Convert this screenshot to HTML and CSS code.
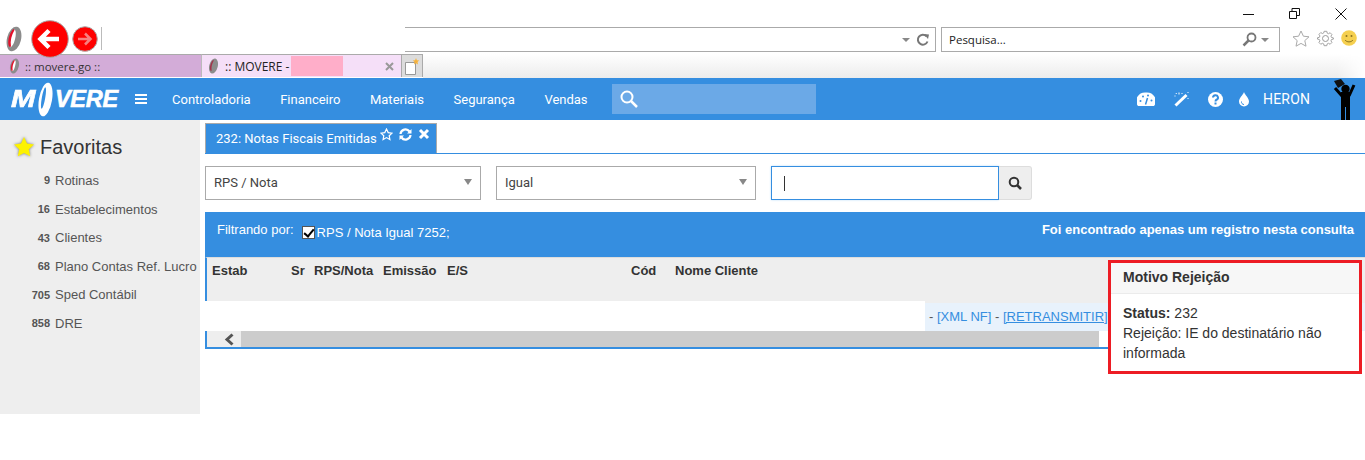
FILE: index.html
```html
<!DOCTYPE html>
<html lang="pt-BR">
<head>
<meta charset="utf-8">
<title>MOVERE</title>
<link rel="stylesheet" href="styles.css">
</head>
<body>
<div class="chrome">
  <div class="winbar">
    <svg class="win-ico" width="12" height="12" viewBox="0 0 12 12"><path d="M0 6.500h11" stroke="#111" fill="none"/></svg>
    <svg class="win-ico" width="12" height="12" viewBox="0 0 12 12"><path d="M.5 3.500h7v7h-7zM3 3V.5h7.500v7H8" stroke="#111" fill="none"/></svg>
    <svg class="win-ico" width="12" height="12" viewBox="0 0 12 12"><path d="M.5 .5l11 11M11.500 .5l-11 11" stroke="#111" fill="none"/></svg>
  </div>
  <div class="toolbar">
    <svg class="brand" width="18" height="26" viewBox="0 0 18 26"><ellipse cx="9" cy="13" rx="7" ry="12.500" transform="rotate(14 9 13)" fill="#8c8c8c"/><ellipse cx="7.500" cy="12.500" rx="2.600" ry="9" transform="rotate(14 7.500 12.500)" fill="#fff"/><path d="M8.500 3C5 6 2.500 13 3.500 19c.5 2 1.500 2.500 2.500 1.500C5 15 6.500 9 9.500 4z" fill="#e3102a"/></svg>
    <div class="nav-btns">
      <svg class="back" width="38" height="38" viewBox="0 0 38 38"><circle cx="19" cy="19" r="18.300" fill="#f00" stroke="#aaa"/><path d="M28 19H11M18 10.500L9.500 19l8.500 8.500" stroke="#fff" stroke-width="4.500" fill="none"/></svg>
      <svg class="fwd" width="26" height="26" viewBox="0 0 26 26"><circle cx="13" cy="13" r="12.300" fill="#f00" stroke="#aaa"/><path d="M6 13h12M13 7.500l5.500 5.500-5.500 5.500" stroke="#f78080" stroke-width="2.500" fill="none"/></svg>
      <span class="sep"></span>
    </div>
    <div class="address">
      <span class="caret-down"></span>
      <svg width="14" height="14" viewBox="0 0 14 14"><path d="M11.500 8.500A5 5 0 1 1 10.500 3.200" stroke="#777" stroke-width="2" fill="none"/><path d="M8 1l5 .5-1 4.500z" fill="#777"/></svg>
    </div>
    <div class="searchbar">
      <span class="searchbar-text">Pesquisa...</span>
      <svg width="15" height="15" viewBox="0 0 15 15"><circle cx="9.500" cy="5.500" r="4" stroke="#777" stroke-width="1.800" fill="none"/><path d="M6.500 8.500L1.500 13.500" stroke="#777" stroke-width="2.500"/></svg>
      <span class="caret-down"></span>
    </div>
    <div class="tools">
      <svg width="18" height="17" viewBox="0 0 18 17"><path d="M9 1l2.400 5.200 5.600.6-4.200 3.800 1.200 5.600L9 13.400l-5 2.800 1.200-5.600L1 6.800l5.600-.6z" fill="#fff" stroke="#aaa"/></svg>
      <svg width="17" height="17" viewBox="0 0 17 17"><path d="M7 1h3l.4 2 1.500.7 1.800-1.100 2 2-1.100 1.800.7 1.500 2 .4v1.400l-2 .4-.7 1.500 1.100 1.800-2 2-1.800-1.100-1.500.7-.4 2H7l-.4-2-1.500-.7-1.800 1.100-2-2 1.100-1.800-.7-1.500-2-.4V8.100l2-.4.7-1.500L1.300 4.400l2-2 1.800 1.100 1.500-.7z" transform="translate(.8 .4) scale(.9)" fill="#fff" stroke="#999"/><circle cx="8.500" cy="8.500" r="3" fill="#fff" stroke="#999"/></svg>
      <svg width="16" height="16" viewBox="0 0 16 16"><circle cx="8" cy="8" r="7.800" fill="#f5cf4f"/><circle cx="5.500" cy="6" r="1" fill="#8a7420"/><circle cx="10.500" cy="6" r="1" fill="#8a7420"/><path d="M4 10c2 2.500 6 2.500 8 0" stroke="#8a7420" fill="none"/></svg>
    </div>
  </div>
  <div class="tabbar">
    <div class="btab btab-off">
      <svg width="11" height="16" viewBox="0 0 18 26"><ellipse cx="9" cy="13" rx="7" ry="12.500" transform="rotate(14 9 13)" fill="#8c8c8c"/><ellipse cx="7.500" cy="12.500" rx="2.600" ry="9" transform="rotate(14 7.500 12.500)" fill="#fff"/><path d="M8.500 3C5 6 2.500 13 3.500 19c.5 2 1.500 2.500 2.500 1.500C5 15 6.500 9 9.500 4z" fill="#e3102a"/></svg>
      <span>:: movere.go ::</span>
    </div>
    <div class="btab btab-on">
      <svg width="11" height="16" viewBox="0 0 18 26"><ellipse cx="9" cy="13" rx="7" ry="12.500" transform="rotate(14 9 13)" fill="#8c8c8c"/><path d="M8.500 3C5 6 2.500 13 3.500 19c.5 2 1.500 2.500 2.500 1.500C5 15 6.500 9 9.500 4z" fill="#a3324a"/></svg>
      <span class="btab-label">:: MOVERE -</span>
      <span class="redact"></span>
      <svg class="btab-x" width="9" height="9" viewBox="0 0 9 9"><path d="M1 1l7 7M8 1L1 8" stroke="#999" stroke-width="2"/></svg>
    </div>
    <div class="newtab">
      <svg width="16" height="17" viewBox="0 0 16 17"><path d="M1.500 4.500h10v12h-10z" fill="#fff" stroke="#999"/><path d="M12 0l.9 2.200 2.300.3-1.700 1.600.5 2.400L12 5.300 10 6.500l.5-2.400-1.700-1.600 2.300-.3z" fill="#f7b23b"/></svg>
    </div>
    <div class="tabfade"></div>
  </div>
</div>

<header class="topnav">
  <div class="logo">
    <span class="logo-m">M</span>
    <svg class="logo-tire" width="17" height="35" viewBox="0 0 17 35"><ellipse cx="8.500" cy="17.500" rx="6.500" ry="17" transform="rotate(10 8.500 17.500)" fill="#fff"/><ellipse cx="6.500" cy="16" rx="1.700" ry="11" transform="rotate(10 6.500 16)" fill="#358ee0"/></svg>
    <span class="logo-rest">VERE</span>
  </div>
  <svg class="burger" width="12" height="10" viewBox="0 0 12 10"><path d="M0 1h12M0 5h12M0 9h12" stroke="#fff" stroke-width="2"/></svg>
  <nav class="menu">
    <span>Controladoria</span><span>Financeiro</span><span>Materiais</span><span>Segurança</span><span>Vendas</span>
  </nav>
  <div class="navsearch">
    <svg width="18" height="18" viewBox="0 0 18 18"><circle cx="7" cy="7" r="5.500" stroke="#fff" stroke-width="2" fill="none"/><path d="M11 11l6 6" stroke="#fff" stroke-width="2.500"/></svg>
  </div>
  <div class="navright">
    <svg class="ni-gauge" width="18" height="14" viewBox="0 0 18 14"><path d="M1 14A9 8.500 0 0 1 9 .5 9 8.500 0 0 1 17 14z" fill="#fff"/><path d="M8.500 12.500L10.500 6" stroke="#358ee0" stroke-width="1.500"/><circle cx="3.500" cy="9" r="1" fill="#358ee0"/><circle cx="6" cy="4.500" r="1" fill="#358ee0"/><circle cx="11" cy="3.500" r="1" fill="#358ee0"/><circle cx="14.500" cy="8.500" r="1" fill="#358ee0"/></svg>
    <svg class="ni-wand" width="15" height="15" viewBox="0 0 15 15"><path d="M1.500 13.500L12.500 3" stroke="#fff" stroke-width="3"/><path d="M2 1l.5 1M5 .5v2M8 1v1M14 6v1M.5 4h1M14 0v1" stroke="#fff"/></svg>
    <svg class="ni-help" width="15" height="15" viewBox="0 0 15 15"><circle cx="7.500" cy="7.500" r="7.500" fill="#fff"/><path d="M5 5.500a2.500 2.300 0 1 1 3.500 2.200c-.7.4-1 .8-1 1.800" stroke="#358ee0" stroke-width="2" fill="none"/><rect x="6.500" y="10.500" width="2" height="2" fill="#358ee0"/></svg>
    <svg class="ni-drop" width="12" height="15" viewBox="0 0 12 15"><path d="M6 0c1 3 5 6 5 9.500a5 5 0 0 1-10 0C1 6 5 3 6 0z" fill="#fff"/><path d="M3.500 9.500a2.500 2.500 0 0 0 2.500 3" stroke="#358ee0" fill="none"/></svg>
    <span class="username">HERON</span>
    <svg class="ni-man" width="26" height="41" viewBox="0 0 26 41"><path d="M9 13h9v28h-4V28h-1v13H9z" fill="#000"/><circle cx="13.500" cy="10" r="4.200" fill="#000"/><path d="M10 17L3 9M17 17l5-11" stroke="#000" stroke-width="3" fill="none"/><path d="M2 2l7-2 4 5-7 4z" fill="#111"/></svg>
  </div>
</header>

<div class="page">
  <aside class="sidebar">
    <h2 class="fav-title">
      <svg class="fav-star" width="22" height="22" viewBox="0 0 22 22"><path d="M11 1l3 6.600 7 .8-5.200 4.800 1.400 7L11 17l-6.200 3.200 1.400-7L1 8.400l7-.8z" fill="#fdf200"/></svg>
      <span>Favoritas</span>
    </h2>
    <ul class="fav-list">
      <li><b>9</b><span>Rotinas</span></li>
      <li><b>16</b><span>Estabelecimentos</span></li>
      <li><b>43</b><span>Clientes</span></li>
      <li><b>68</b><span>Plano Contas Ref. Lucro</span></li>
      <li><b>705</b><span>Sped Contábil</span></li>
      <li><b>858</b><span>DRE</span></li>
    </ul>
  </aside>
  <main class="main">
    <div class="tabline">
      <div class="apptab">
        <span class="apptab-label">232: Notas Fiscais Emitidas</span>
        <div class="apptab-icons">
          <svg width="13" height="13" viewBox="0 0 13 13"><path d="M6.500 1l1.700 3.600 3.800.5-2.800 2.600.7 3.800-3.400-1.900-3.400 1.900.7-3.800L1 5.100l3.800-.5z" fill="none" stroke="#fff" stroke-width="1.200"/></svg>
          <svg width="13" height="13" viewBox="0 0 13 13"><path d="M1.500 6A5 5 0 0 1 10.500 3.500M11.500 7A5 5 0 0 1 2.500 9.500" stroke="#fff" stroke-width="2.200" fill="none"/><path d="M12.500 1v4.500H8zM.5 12V7.500H5z" fill="#fff"/></svg>
          <svg width="12" height="12" viewBox="0 0 12 12"><path d="M2 2l8 8M10 2l-8 8" stroke="#fff" stroke-width="3"/></svg>
        </div>
      </div>
    </div>
    <div class="filters">
      <div class="select select-a"><span>RPS / Nota</span><i></i></div>
      <div class="select select-b"><span>Igual</span><i></i></div>
      <div class="searchgroup">
        <div class="textbox"><span class="cursor"></span></div>
        <button class="go" type="button"><svg width="14" height="14" viewBox="0 0 14 14"><circle cx="6" cy="6" r="4.300" stroke="#333" stroke-width="2" fill="none"/><path d="M9 9l4 4" stroke="#333" stroke-width="2.500"/></svg></button>
      </div>
    </div>
    <section class="panel">
      <div class="panel-left">
        <span class="panel-label">Filtrando por:</span>
        <label class="panel-check"><input type="checkbox" checked>RPS / Nota Igual 7252;</label>
      </div>
      <strong class="panel-right">Foi encontrado apenas um registro nesta consulta</strong>
    </section>
    <div class="thead">
      <span>Estab</span><span>Sr</span><span>RPS/Nota</span><span>Emissão</span><span>E/S</span><span>Cód</span><span>Nome Cliente</span>
    </div>
    <div class="trow">
      <div class="tcell">- <a href="#">[XML NF]</a> - <a href="#" class="under">[RETRANSMITIR]</a></div>
    </div>
    <div class="hscroll">
      <span class="hs-btn"><svg width="11" height="13" viewBox="0 0 11 13"><path d="M8.500 1.500L3 6.500l5.500 5" stroke="#555" stroke-width="3" fill="none"/></svg></span>
      <span class="hs-thumb"></span>
    </div>
    <div class="popover">
      <div class="pop-head">Motivo Rejeição</div>
      <div class="pop-body"><b>Status:</b> 232<br>Rejeição: IE do destinatário não informada</div>
    </div>
  </main>
</div>
</body>
</html>
```

FILE: styles.css
```css
* { box-sizing: border-box; }
html, body { margin: 0; padding: 0; background: #fff; }
body { width: 1365px; height: 460px; overflow: hidden; font-family: "Liberation Sans", Arial, sans-serif; color: #333; }

/* browser chrome */
.chrome { height: 78px; background: #fff; }
.winbar { height: 27px; display: flex; justify-content: flex-end; gap: 34px; padding: 8px 18px 0 0; }
.win-ico { display: block; }
.toolbar { height: 27px; display: flex; align-items: flex-start; position: relative; }
.brand { margin: -1px 0 0 5px; flex: none; }
.nav-btns { width: 382px; flex: none; position: relative; display: flex; align-items: flex-start; }
.back { margin: -7px 0 0 8px; position: relative; z-index: 2; flex: none; }
.fwd { margin: -1px 0 0 3px; flex: none; }
.sep { width: 1px; height: 23px; background: #bbb; margin-left: 3px; }
.address { width: 531px; height: 25px; border: 1px solid #aaa; border-left: 0; display: flex; align-items: center; justify-content: flex-end; gap: 6px; padding-right: 5px; }
.caret-down { width: 0; height: 0; border: 4px solid transparent; border-top: 4px solid #888; border-bottom: 0; }
.searchbar { width: 339px; height: 25px; margin-left: 5px; border: 1px solid #aaa; display: flex; align-items: center; padding: 0 10px 0 7px; gap: 4px; }
.searchbar-text { flex: 1; font: 11.5px "Open Sans", sans-serif; color: #222; }
.tools { display: flex; gap: 7px; margin: 3px 0 0 12px; }
.tabbar { height: 24px; display: flex; }
.btab { height: 23px; display: flex; align-items: center; font: 12px "Open Sans", sans-serif; color: #222; border-top: 1px solid #aaa; flex: none; white-space: nowrap; }
.btab-off { width: 201px; background: #d3acd8; padding-left: 9px; gap: 5px; color: #333; font-size: 11.5px; }
.btab-on { width: 200px; background: #f5dff8; padding-left: 6px; gap: 6px; border-left: 1px solid #bbb; }
.btab-label { width: 60px; }
.redact { width: 52px; height: 20px; background: #ffaec9; }
.btab-x { margin-left: 36px; }
.newtab { width: 22px; height: 23px; background: #dcdcdc; border: 1px solid #aaa; border-bottom: 0; display: flex; align-items: center; justify-content: center; flex: none; }
.tabfade { flex: 1; background: linear-gradient(#fff, #ececec); -webkit-mask-image: linear-gradient(90deg, #000 97%, transparent 100%); mask-image: linear-gradient(90deg, #000 97%, transparent 100%); }

/* app nav */
.topnav { height: 42px; background: #358ee0; display: flex; align-items: center; color: #fff; font-family: Roboto, sans-serif; font-size: 13px; }
.logo { width: 118px; margin-left: 11px; display: flex; align-items: center; font: italic bold 23.5px "Liberation Sans", sans-serif; -webkit-text-stroke: .6px #fff; flex: none; }
.logo-m { display: inline-block; width: 26px; transform: scaleX(1.25); transform-origin: left center; }
.logo-tire { flex: none; margin-top: 1px; }
.logo-rest { margin-left: 1px; letter-spacing: -.3px; }
.burger { margin-left: 6px; flex: none; }
.menu { display: flex; gap: 29.5px; margin-left: 25px; width: 440px; flex: none; }
.navsearch { width: 204px; height: 30px; background: #6ba9e7; padding: 6px 0 0 8px; flex: none; }
.navsearch svg { display: block; }
.navright { margin-left: auto; display: flex; align-items: center; padding-right: 7px; align-self: stretch; font-size: 14px; }
.ni-wand { margin-left: 19px; }
.ni-help { margin-left: 19px; }
.ni-drop { margin-left: 15px; }
.username { margin-left: 13px; width: 47px; letter-spacing: .2px; }
.ni-man { margin: 1px 0 0 22px; align-self: flex-start; }

/* page */
.page { display: flex; align-items: flex-start; }
.sidebar { width: 200px; height: 294px; background: #eee; flex: none; padding-top: 15px; }
.fav-title { margin: 0; height: 24px; display: flex; align-items: center; gap: 5px; padding-left: 13px; font-size: 20px; font-weight: 400; color: #333; }
.fav-star { filter: drop-shadow(0 0 1.500px #777); }
.fav-list { list-style: none; margin: 7.2px 0 0; padding: 0; }
.fav-list li { height: 28.6px; display: flex; align-items: center; font-size: 13px; color: #555; white-space: nowrap; }
.fav-list b { width: 50px; text-align: right; font-size: 11px; margin-right: 5px; flex: none; }

.main { width: 1165px; position: relative; padding: 3px 0 0 5px; }
.tabline { height: 31px; border-bottom: 1px solid #358ee0; }
.apptab { width: 232px; height: 30px; background: #358ee0; border: 1px solid #aaa; border-bottom: 0; color: #fff; font: 13px Roboto, sans-serif; display: flex; padding: 7px 0 0 10px; white-space: nowrap; }
.apptab-label { width: 164px; flex: none; }
.apptab-icons { display: flex; gap: 6px; margin: -3px 0 0 0; height: 13px; }
.filters { display: flex; margin-top: 12px; height: 34px; font-size: 13px; }
.select { height: 34px; border: 1px solid #aaa; display: flex; align-items: center; justify-content: space-between; padding: 0 8px 2px; color: #444; font-family: Roboto, sans-serif; flex: none; }
.select i { width: 0; height: 0; border: 4px solid transparent; border-top: 6px solid #888; border-bottom: 0; margin-top: -1px; }
.select-a { width: 276px; }
.select-b { width: 260px; margin-left: 15px; }
.searchgroup { display: flex; margin-left: 15px; }
.textbox { width: 228px; height: 34px; border: 1px solid #358ee0; box-shadow: 0 0 2px #bcdcf8; padding: 9px 0 0 12px; }
.cursor { display: block; width: 1px; height: 15px; background: #333; }
.go { width: 33px; height: 34px; background: #eee; border: 1px solid #ddd; border-left: 0; padding: 0; display: flex; align-items: center; justify-content: center; border-radius: 0 3px 3px 0; }

.panel { margin-top: 12px; height: 45px; background: #358ee0; color: #fff; display: flex; justify-content: space-between; padding: 10px 11px 0 12px; }
.panel-left { display: flex; }
.panel-label { font-size: 13px; line-height: 15px; }
.panel-check { display: flex; font-size: 13px; line-height: 16px; margin: 3px 0 0 8px; }
.panel-check input { appearance: none; -webkit-appearance: none; width: 13px; height: 13px; margin: 1px 2px 0 0; background: #fff; border: 1px solid #555; position: relative; flex: none; }
.panel-check input:checked::after { content: ""; position: absolute; left: 3px; top: 0; width: 4px; height: 8px; border: solid #000; border-width: 0 2px 2px 0; transform: rotate(40deg); }
.panel-right { font-size: 13px; line-height: 15px; }

.thead { height: 44px; background: #eee; border-left: 2px solid #358ee0; display: grid; grid-template-columns: 79px 23px 69px 64px 184px 44px 1fr; padding: 5px 0 0 5px; font-size: 13px; font-weight: 700; line-height: 15px; color: #333; border-top: 1px solid #ddd; }
.trow { height: 30px; margin-left: -5px; display: flex; justify-content: flex-end; background: #fff; }
.tcell { width: 440px; height: 30px; background: #e8f2fc; border-top: 2px solid #eee; padding-left: 4px; line-height: 27px; font-size: 13px; color: #555; white-space: nowrap; overflow: hidden; }
.tcell a { color: #358ee0; text-decoration: none; }
.tcell a.under { text-decoration: underline; }
.hscroll { height: 18px; border-left: 2px solid #358ee0; border-bottom: 2px solid #358ee0; display: flex; width: 903px; }
.hs-btn { width: 34px; background: #eee; display: flex; align-items: center; justify-content: flex-end; padding-right: 6px; }
.hs-thumb { width: 858px; background: #ccc; }

.popover { position: absolute; left: 908px; top: 140px; width: 254px; height: 114px; background: #fff; border: 3px solid #ed1c24; }
.pop-head { height: 31px; background: #f7f7f7; border-bottom: 1px solid #ebebeb; padding: 0 12px; font-size: 14px; font-weight: 700; line-height: 28px; color: #333; }
.pop-body { padding: 9px 12px 0; font-size: 14px; line-height: 20px; color: #333; }
```
